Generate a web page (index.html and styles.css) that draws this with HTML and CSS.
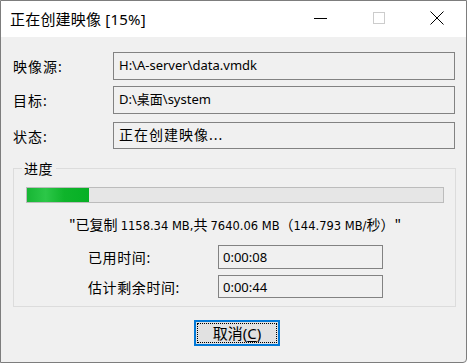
FILE: index.html
```html
<!DOCTYPE html>
<html>
<head>
<meta charset="utf-8">
<link rel="stylesheet" href="styles.css">
</head>
<body>
<div class="window">
  <div class="titlebar">
    <span class="title">正在创建映像 [15%]</span>
    <div class="controls">
      <span class="ctl"><svg width="14" height="14" viewBox="0 0 14 14"><line x1="0" y1="7.5" x2="13" y2="7.5" stroke="#000" stroke-width="1"/></svg></span>
      <span class="ctl"><svg width="14" height="14" viewBox="0 0 14 14"><rect x="1.5" y="1.5" width="11" height="11" fill="none" stroke="#cccccc" stroke-width="1"/></svg></span>
      <span class="ctl"><svg width="14" height="14" viewBox="0 0 14 14"><path d="M0.5 0.5 L13.5 13.5 M13.5 0.5 L0.5 13.5" stroke="#000" stroke-width="1"/></svg></span>
    </div>
  </div>
  <div class="content">
    <div class="row r1"><span class="label">映像源:</span><div class="field">H:\A-server\data.vmdk</div></div>
    <div class="row r2"><span class="label">目标:</span><div class="field">D:\桌面\system</div></div>
    <div class="row r3"><span class="label">状态:</span><div class="field cjk">正在创建映像...</div></div>
    <div class="group">
      <span class="legend">进度</span>
      <div class="progress"><div class="fill" style="width:15%"></div></div>
      <div class="stats">"已复制 <span class="lat">1158.34 MB,</span>共 <span class="lat">7640.06 MB</span>（<span class="lat">144.793 MB/</span>秒）"</div>
      <div class="trow t1"><span class="tlabel">已用时间:</span><div class="tfield">0:00:08</div></div>
      <div class="trow t2"><span class="tlabel">估计剩余时间:</span><div class="tfield">0:00:44</div></div>
    </div>
    <div class="buttons">
      <button class="btn"><span class="focus">取消(<u>C</u>)</span></button>
    </div>
  </div>
</div>
</body>
</html>
```
FILE: styles.css
```css
html, body {
  margin: 0;
  padding: 0;
  background: #ffffff;
}
.window {
  width: 467px;
  height: 363px;
  box-sizing: border-box;
  border: 1px solid #7d7d7d;
  border-bottom-right-radius: 4px;
  background: #f0f0f0;
  display: flex;
  flex-direction: column;
  font-family: "Noto Sans", "Noto Sans CJK SC", sans-serif;
  color: #000;
}
.titlebar {
  height: 36px;
  background: #ffffff;
  display: flex;
  align-items: center;
  justify-content: space-between;
  flex: none;
}
.title {
  font-size: 15px;
  margin-left: 9px;
  margin-top: -2px;
  letter-spacing: 0.2px;
}
.controls {
  display: flex;
  height: 100%;
}
.ctl {
  width: 58px;
  display: flex;
  align-items: center;
  justify-content: center;
}
.ctl svg { display: block; margin-top: -2px; }
.content {
  flex: 1;
  display: flex;
  flex-direction: column;
  padding: 15px 10px 0 12px;
}
.row {
  display: flex;
  align-items: center;
  height: 28px;
}
.r2 { margin-top: 6px; }
.r3 { margin-top: 8px; height: 27px; }
.label {
  width: 100px;
  font-size: 14px;
  letter-spacing: 1px;
}
.field {
  width: 342px;
  height: 100%;
  box-sizing: border-box;
  border: 1px solid #828282;
  font-size: 13px;
  padding: 3px 5px;
  line-height: 18px;
}
.field.cjk { font-size: 14px; letter-spacing: 1px; }
.group {
  position: relative;
  margin-top: 19px;
  width: 443px;
  height: 139px;
  box-sizing: border-box;
  border: 1px solid #dcdcdc;
  display: flex;
  flex-direction: column;
  padding: 18px 11px 0 12px;
}
.legend {
  position: absolute;
  left: 8px;
  top: -10px;
  padding: 0 3px 0 2px;
  background: #f0f0f0;
  font-size: 14px;
  line-height: 20px;
  letter-spacing: 0.5px;
}
.progress {
  height: 16px;
  width: 418px;
  box-sizing: border-box;
  border: 1px solid #bcbcbc;
  background: #e6e6e6;
}
.fill {
  height: 100%;
  background: linear-gradient(to right, #17b634 0%, #2cc748 30%, #0fb42b 60%, #06b025 100%);
}
.stats {
  margin-top: 12px;
  text-align: center;
  font-size: 14px;
  line-height: 18px;
  font-family: "Noto Sans CJK SC", sans-serif;
}
.lat {
  font-family: "DejaVu Sans", sans-serif;
  font-size: 11.5px;
}
.trow {
  display: flex;
  align-items: center;
  height: 24px;
  padding-left: 62px;
}
.t1 { margin-top: 10px; }
.t2 { margin-top: 6px; height: 23px; }
.tlabel {
  width: 130px;
  font-size: 14px;
  letter-spacing: 0.6px;
}
.tfield {
  width: 165px;
  height: 100%;
  box-sizing: border-box;
  border: 1px solid #828282;
  font-size: 13px;
  padding: 2px 4px;
  line-height: 18px;
}
.buttons {
  display: flex;
  justify-content: center;
  margin-top: 13px;
  padding-left: 5px;
}
.btn {
  width: 86px;
  height: 26px;
  box-sizing: border-box;
  border: 2px solid #0078d7;
  background: #e1e1e1;
  padding: 1px;
  margin: 0;
  display: flex;
  font-family: "Noto Sans", "Noto Sans CJK SC", sans-serif;
  font-size: 15px;
  color: #000;
}
.focus {
  flex: 1;
  border: 1px dotted #000;
  display: flex;
  align-items: center;
  justify-content: center;
  line-height: 18px;
}
.focus u { text-decoration-thickness: 1px; text-underline-offset: 2px; }
```
